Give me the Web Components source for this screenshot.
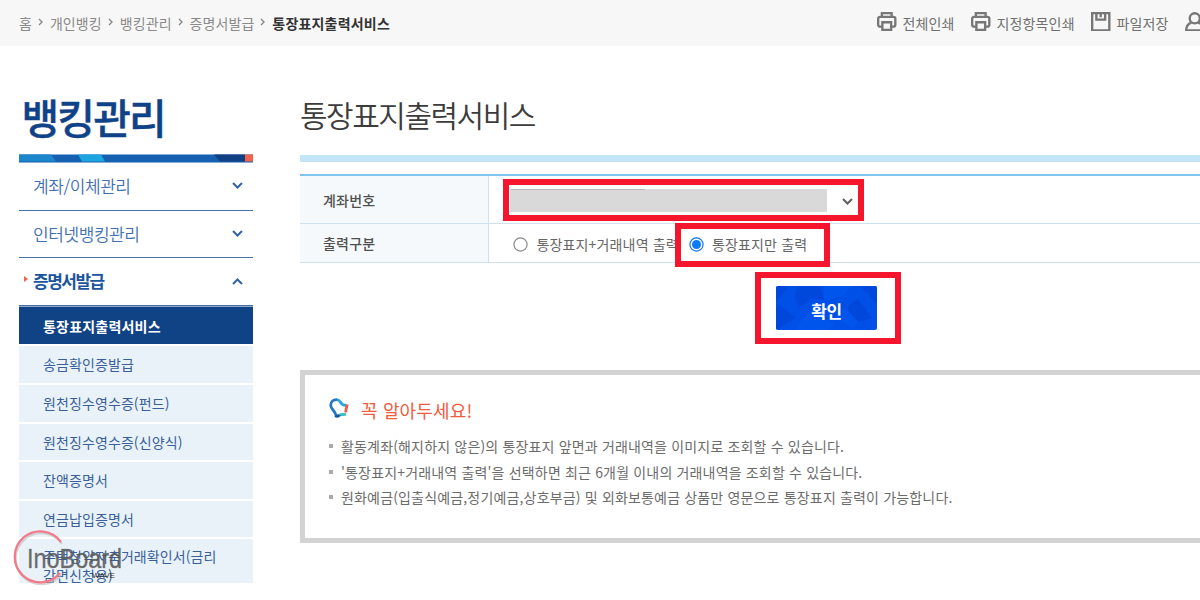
<!DOCTYPE html>
<html lang="ko">
<head>
<meta charset="utf-8">
<title>통장표지출력서비스</title>
<style>
    body {
        margin: 0;
        width: 1200px;
        height: 600px;
        overflow: hidden;
        background: #fff;
        font-family: "Noto Sans CJK KR", "Noto Sans", sans-serif;
        font-size: 14px;
        color: #666;
    }
</style>
</head>
<body>
<bank-page>
    <top-bar slot="top">
        <crumb-item>홈</crumb-item>
        <crumb-item>개인뱅킹</crumb-item>
        <crumb-item>뱅킹관리</crumb-item>
        <crumb-item>증명서발급</crumb-item>
        <crumb-item current>통장표지출력서비스</crumb-item>
        <tool-link slot="tools" icon="print" style="width:94px">전체인쇄</tool-link>
        <tool-link slot="tools" icon="print" style="width:120px">지정항목인쇄</tool-link>
        <tool-link slot="tools" icon="save" style="width:94px">파일저장</tool-link>
        <tool-link slot="tools" icon="user" style="width:94px"></tool-link>
    </top-bar>
    <side-menu slot="side" heading="뱅킹관리">
        <menu-group>계좌/이체관리</menu-group>
        <menu-group>인터넷뱅킹관리</menu-group>
        <menu-group open>증명서발급</menu-group>
        <sub-item active>통장표지출력서비스</sub-item>
        <sub-item>송금확인증발급</sub-item>
        <sub-item>원천징수영수증(펀드)</sub-item>
        <sub-item>원천징수영수증(신양식)</sub-item>
        <sub-item>잔액증명서</sub-item>
        <sub-item>연금납입증명서</sub-item>
        <sub-item long>주택청약저축거래확인서(금리감면신청용)</sub-item>
    </side-menu>
    <page-title>통장표지출력서비스</page-title>
    <form-table>
        <form-row label="계좌번호" style="height:47px"><account-select></account-select></form-row>
        <form-row label="출력구분" style="height:38px">
            <radio-option style="width:175.5px">통장표지+거래내역 출력</radio-option>
            <radio-option checked>통장표지만 출력</radio-option>
        </form-row>
    </form-table>
    <confirm-button>확인</confirm-button>
    <notice-box heading="꼭 알아두세요!">
        <notice-line>활동계좌(해지하지 않은)의 통장표지 앞면과 거래내역을 이미지로 조회할 수 있습니다.</notice-line>
        <notice-line>'통장표지+거래내역 출력'을 선택하면 최근 6개월 이내의 거래내역을 조회할 수 있습니다.</notice-line>
        <notice-line>원화예금(입출식예금,정기예금,상호부금) 및 외화보통예금 상품만 영문으로 통장표지 출력이 가능합니다.</notice-line>
    </notice-box>
    <mark-box slot="marks" style="left:503px;top:179px;width:361px;height:41.5px"></mark-box>
    <mark-box slot="marks" style="left:675px;top:223px;width:155px;height:44px"></mark-box>
    <mark-box slot="marks" style="left:755px;top:272px;width:146px;height:72px"></mark-box>
    <water-mark slot="marks"></water-mark>
</bank-page>

<script>
    // Shared base: clones the class markup into an open shadow root
    class BaseElement extends HTMLElement {
        constructor() {
            super();
            const template = document.createElement('template');
            template.innerHTML = this.constructor.markup;
            this.attachShadow({mode: 'open'});
            this.shadowRoot.appendChild(template.content.cloneNode(true));
        }
    }

    class BankPage extends BaseElement {
        static markup = `
            <style>
                :host { display: block; position: relative; width: 1200px; height: 600px; overflow: hidden; }
                .cols { display: flex; }
                .side { flex: 0 0 234px; margin: 0 47px 0 19px; }
                main { flex: 1; min-width: 0; }
            </style>
            <slot name="top"></slot>
            <div class="cols">
                <div class="side"><slot name="side"></slot></div>
                <main><slot></slot></main>
            </div>
            <slot name="marks"></slot>
        `;
    }

    class TopBar extends BaseElement {
        static markup = `
            <style>
                :host { display: flex; height: 46px; background: #f7f7f7; align-items: center; overflow: hidden; }
                .path { display: flex; flex: 0 0 858px; padding-left: 19px; }
                .tools { display: flex; flex: none; }
            </style>
            <div class="path"><slot></slot></div>
            <div class="tools"><slot name="tools"></slot></div>
        `;
    }

    class CrumbItem extends BaseElement {
        static markup = `
            <style>
                :host { display: flex; align-items: center; line-height: 20px; color: #8a8a8a; white-space: nowrap; letter-spacing: 0.1px; }
                :host([current]) { color: #333; font-weight: bold; letter-spacing: 0.2px; }
                svg { margin: 0 6px 2px 5.9px; }
                :host([current]) svg { display: none; }
            </style>
            <slot></slot>
            <svg width="6" height="8" viewBox="0 0 6 8"><path d="M1 1l3 3-3 3" fill="none" stroke="#888" stroke-width="1.4"/></svg>
        `;
    }

    const toolIcons = {
        print: '<path d="M5 5V1.200h10V5M5 15H3.200A2 2 0 0 1 1.200 13V7a2 2 0 0 1 2-2h13.600a2 2 0 0 1 2 2v6a2 2 0 0 1-2 2H15M5.500 10.500h9v8h-9z"/>',
        save: '<path d="M1.200 1.200h17.600v17.600H1.200z"/><path d="M5.500 1.500v6.300h9V1.500M10 1.500v4"/>',
        user: '<circle cx="10" cy="6.500" r="5.200"/><path d="M6.500 10.800C3 12 1.200 14.500 1.200 18.800h17.600c0-4.300-1.800-6.800-5.300-8"/>'
    };

    class ToolLink extends BaseElement {
        static markup = `
            <style>
                :host { display: flex; flex: none; align-items: center; gap: 6px; line-height: 20px; color: #707070; white-space: nowrap; letter-spacing: 0.15px; }
                svg { margin-bottom: 3px; flex: none; }
            </style>
            <svg width="19.500" height="19.500" viewBox="0 0 20 20" fill="none" stroke="#777" stroke-width="2.400"></svg>
            <span><slot></slot></span>
        `;
        connectedCallback() {
            this.shadowRoot.querySelector('svg').innerHTML = toolIcons[this.getAttribute('icon')];
        }
    }

    class SideMenu extends BaseElement {
        static markup = `
            <style>
                :host { display: block; height: 537px; overflow: hidden; }
                h2 { margin: 0; height: 108px; padding: 39.5px 0 0 2.5px; box-sizing: border-box; font-size: 41px; line-height: 60px; color: #104288; letter-spacing: -1.9px; font-weight: 500; -webkit-text-stroke: 0.4px #104288; }
                svg { display: block; }
            </style>
            <h2></h2>
            <svg width="234" height="9" viewBox="0 0 234 9">
                <path fill="#1560b0" d="M0 .5h234v8H0z"/>
                <path fill="#1b86cb" d="M0 .5h32l5 7H0z"/>
                <path fill="#1ea5e1" d="M59 .5h23l4 7H63z"/>
                <path fill="#113f83" d="M195 .5h31v7h-25z"/>
                <path fill="#f4624a" d="M226 .5h8v7h-8z"/>
            </svg>
            <slot></slot>
        `;
        connectedCallback() {
            this.shadowRoot.querySelector('h2').textContent = this.getAttribute('heading');
        }
    }

    class MenuGroup extends BaseElement {
        static markup = `
            <style>
                :host { display: flex; align-items: center; height: 47.7px; box-sizing: border-box; border-bottom: 1px solid #4a70ab; padding: 0 10px 2px 0; font-size: 17px; color: #3f70b2; letter-spacing: -0.42px; font-weight: 350; }
                :host([open]) { height: 47.2px; color: #1c559f; font-weight: bold; letter-spacing: -1.5px; padding-bottom: 1px; }
                i { width: 0; height: 0; margin-left: 5px; margin-right: 5px; border-left: 4px solid transparent; border-top: 3px solid transparent; border-bottom: 3px solid transparent; }
                :host([open]) i { border-left-color: #f4624a; margin-bottom: 3px; }
                span { flex: 1; }
                svg { margin-top: 1px; }
                :host([open]) svg { transform: rotate(180deg); }
            </style>
            <i></i>
            <span><slot></slot></span>
            <svg width="11" height="7" viewBox="0 0 11 7"><path d="M1 1l4.500 4.500L10 1" fill="none" stroke="#3564a4" stroke-width="2"/></svg>
        `;
    }

    class SubItem extends BaseElement {
        static markup = `
            <style>
                :host { display: block; height: 38.6px; box-sizing: border-box; border-top: 2px solid #fff; background: #e9f2f8; padding-left: 24px; line-height: 36px; color: #3a5f9a; letter-spacing: 0.1px; }
                :host([active]) { border-top: 1px solid #8fa6c8; height: 38.8px; line-height: 38px; background: #104286; color: #fff; font-weight: bold; letter-spacing: 0.2px; }
                :host([long]) { height: 60px; line-height: 19px; padding-top: 8px; padding-right: 30px; word-break: break-all; }
            </style>
            <slot></slot>
        `;
    }

    class PageTitle extends BaseElement {
        static markup = `
            <style>
                :host { display: block; height: 116px; box-sizing: border-box; border-bottom: 7px solid #c2e6f7; padding-top: 43px; line-height: 50px; font-size: 30px; font-weight: 350; letter-spacing: -1.5px; color: #3c3c3c; }
            </style>
            <slot></slot>
        `;
    }

    class FormTable extends BaseElement {
        static markup = `
            <style>
                :host { display: block; margin-top: 12px; border-top: 2px solid #80c5ef; }
            </style>
            <slot></slot>
        `;
    }

    class FormRow extends BaseElement {
        static markup = `
            <style>
                :host { display: flex; border-bottom: 1px solid #cfe0ee; }
                .label { flex: 0 0 189px; box-sizing: border-box; padding-left: 23px; display: flex; align-items: center; background: #f5f9fc; border-right: 1px solid #cfe0ee; font-weight: 500; color: #505050; letter-spacing: 0.2px; }
                .value { flex: 1; display: flex; align-items: center; padding-left: 24px; }
            </style>
            <div class="label"></div>
            <div class="value"><slot></slot></div>
        `;
        connectedCallback() {
            this.shadowRoot.querySelector('.label').textContent = this.getAttribute('label');
        }
    }

    class AccountSelect extends BaseElement {
        static markup = `
            <style>
                :host { display: flex; align-items: center; width: 348px; height: 26px; margin-left: -3px; padding-top: 2px; }
                .masked { width: 317px; height: 23.5px; background: linear-gradient(#b9b9b9, #b9b9b9) 1px 0 / 134px 1px no-repeat, #d9d9d9; }
                svg { margin: 1px 0 0 15px; }
            </style>
            <div class="masked"></div>
            <svg width="11" height="7" viewBox="0 0 11 7"><path d="M1 1l4.500 4.500L10 1" fill="none" stroke="#606060" stroke-width="2"/></svg>
        `;
    }

    class RadioOption extends BaseElement {
        static markup = `
            <style>
                :host { display: flex; align-items: center; gap: 8.5px; white-space: nowrap; line-height: 20px; color: #666; padding-top: 2px; letter-spacing: 0.15px; }
                svg { flex: none; }
                .dot { display: none; }
                :host([checked]) .ring { stroke: #1373ee; }
                :host([checked]) .dot { display: block; }
            </style>
            <svg width="15" height="15" viewBox="0 0 15 15"><circle class="ring" cx="7.500" cy="7.500" r="6.600" fill="#fff" stroke="#888" stroke-width="1.200"/><circle class="dot" cx="7.500" cy="7.500" r="4.500" fill="#0b7bfa"/></svg>
            <span><slot></slot></span>
        `;
    }

    class ConfirmButton extends BaseElement {
        static markup = `
            <style>
                :host { display: grid; width: 101px; height: 44px; margin: 23px 0 0 476px; border-radius: 2px; overflow: hidden; color: #fff; font-size: 17px; font-weight: bold; letter-spacing: -0.3px; }
                svg, span { grid-area: 1 / 1; }
                span { place-self: center; padding-top: 5px; }
            </style>
            <svg width="101" height="44" viewBox="0 0 101 44">
                <path fill="#0050e8" d="M0 0h101v44H0z"/>
                <path fill="#0047dc" d="M0 0h14L0 15zM22 0h22l4 14-12-2-12 10-6-11zM3 18l17 14-20 12V22zM70 22l12-9 14 19-14 4zM84 0h17v18z"/>
                <path fill="#0056ec" d="M48 0h28l-9 10-19 4zM24 36l12-10 22 12-6 6H20zM70 22l-10 8 16 12 6-6z"/>
            </svg>
            <span><slot></slot></span>
        `;
    }

    class NoticeBox extends BaseElement {
        static markup = `
            <style>
                :host { display: block; box-sizing: border-box; width: 920px; height: 173px; margin-top: 40px; border: 5.5px solid #d3d3d3; padding: 20px 24px; }
                .head { display: flex; align-items: center; gap: 12px; height: 30px; font-size: 18px; color: #f15b40; letter-spacing: 0.15px; margin-bottom: 8px; }
                .head svg { margin-bottom: 5px; }
            </style>
            <div class="head">
                <svg width="20" height="20" viewBox="0 0 20 20" fill="none" stroke-width="2.800">
                    <path stroke="#2476c5" d="M7 17.500C6.500 13 2 11.500 1.700 7.500 1.500 3.500 4.500 1.500 8 1.700"/>
                    <path stroke="#25a4df" d="M8 1.700c3 .4 3.500 3.800 6 5 1.500.7 2.500.6 3.500.5"/>
                    <path stroke="#f15b40" d="M18.300 6.500c-.8 3-1.500 5-1.600 8"/>
                    <path stroke="#3abfc4" d="M17 16.200c-2 .8-4-.2-6.500.6"/>
                    <path stroke="#1c559f" d="M10.500 16.800c-1 1.700-2.500 1.900-4.500 1"/>
                </svg>
                <span></span>
            </div>
            <slot></slot>
        `;
        connectedCallback() {
            this.shadowRoot.querySelector('.head span').textContent = this.getAttribute('heading');
        }
    }

    class NoticeLine extends BaseElement {
        static markup = `
            <style>
                :host { display: flex; align-items: center; height: 25.8px; white-space: nowrap; color: #6c6c6c; letter-spacing: 0.165px; }
                i { width: 4px; height: 4px; background: #aaa; margin-right: 8px; }
            </style>
            <i></i><span><slot></slot></span>
        `;
    }

    // Red frame laid over the page around a step the reader has to follow
    class MarkBox extends BaseElement {
        static markup = `
            <style>
                :host { position: absolute; box-sizing: border-box; border: 6px solid #f5152d; }
            </style>
        `;
    }

    class WaterMark extends BaseElement {
        static markup = `
            <style>
                :host { position: absolute; left: 8px; top: 525px; }
            </style>
            <svg width="120" height="70" viewBox="0 0 120 70" font-family="Liberation Sans, sans-serif">
                <path d="M53 17A25.500 25.500 0 1 0 52 48" fill="none" stroke="#bbb" stroke-width="2" opacity=".6" transform="translate(1 2)"/>
                <path d="M53 17A25.500 25.500 0 1 0 52 48" fill="none" stroke="#f27a8b" stroke-width="2.300"/>
                <text x="19" y="43" font-size="27" textLength="95" lengthAdjust="spacingAndGlyphs" fill="#555" fill-opacity=".85" stroke="#555" stroke-opacity=".5" stroke-width=".6">InoBoard</text>
                <text x="84" y="53" font-size="7" textLength="23" lengthAdjust="spacingAndGlyphs" fill="#333">WAVE</text>
            </svg>
        `;
    }

    customElements.define('bank-page', BankPage);
    customElements.define('top-bar', TopBar);
    customElements.define('crumb-item', CrumbItem);
    customElements.define('tool-link', ToolLink);
    customElements.define('side-menu', SideMenu);
    customElements.define('menu-group', MenuGroup);
    customElements.define('sub-item', SubItem);
    customElements.define('page-title', PageTitle);
    customElements.define('form-table', FormTable);
    customElements.define('form-row', FormRow);
    customElements.define('account-select', AccountSelect);
    customElements.define('radio-option', RadioOption);
    customElements.define('confirm-button', ConfirmButton);
    customElements.define('notice-box', NoticeBox);
    customElements.define('notice-line', NoticeLine);
    customElements.define('mark-box', MarkBox);
    customElements.define('water-mark', WaterMark);
</script>
</body>
</html>
